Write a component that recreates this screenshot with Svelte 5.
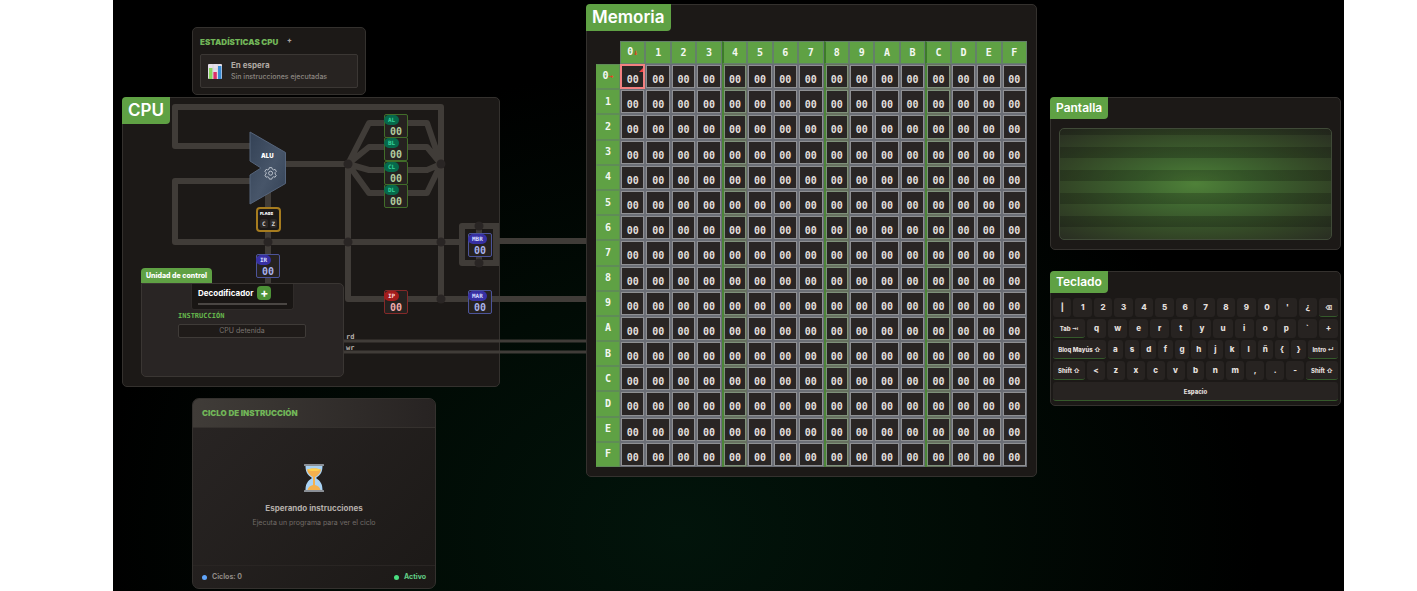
<script>
  const hex = '0123456789ABCDEF'.split('');

  const registers = [
    { name: 'AL', kind: 'green', x: 261, y: 16 },
    { name: 'BL', kind: 'green', x: 261, y: 39 },
    { name: 'CL', kind: 'green', x: 261, y: 63 },
    { name: 'DL', kind: 'green', x: 261, y: 86 },
    { name: 'IR', kind: 'blue', x: 133, y: 156 },
    { name: 'IP', kind: 'red', x: 261, y: 192 },
    { name: 'MBR', kind: 'blue', x: 345, y: 135 },
    { name: 'MAR', kind: 'blue', x: 345, y: 192 }
  ];

  const joints = [
    [348, 164], [441, 164], [268, 242], [348, 242], [441, 242],
    [441, 299], [479, 226], [479, 263]
  ];

  const keyRows = [
    { keys: '| 1 2 3 4 5 6 7 8 9 0 \' ¿'.split(' '), after: { label: '⌫', size: 'del' } },
    { before: { label: 'Tab ⇥', size: 'indent' }, keys: 'q w e r t y u i o p ` +'.split(' ') },
    { before: { label: 'Bloq Mayús ⇧', size: 'caps' }, keys: 'a s d f g h j k l ñ { }'.split(' '), after: { label: 'Intro ↵', size: 'intro' } },
    { before: { label: 'Shift ⇧', size: 'shift' }, keys: '< z x c v b n m , . -'.split(' '), after: { label: 'Shift ⇧', size: 'shift' } }
  ];
</script>

<main class="stage">
  <div class="left">
    <section class="card stats">
      <h2 class="caps-title">ESTADÍSTICAS CPU <button class="expand" aria-label="Expandir">+</button></h2>
      <div class="idle">
        <svg class="chart" viewBox="0 0 14 15" aria-hidden="true">
          <rect width="14" height="15" rx="1" fill="#e4dfe9" />
          <path d="M0 5h14M0 10h14M5 0v15M10 0v15" stroke="#c8c2d0" stroke-width=".5" />
          <rect x="1" y="4" width="3.4" height="11" fill="#87d65b" />
          <rect x="5.4" y="8" width="3.4" height="7" fill="#dc2f68" />
          <rect x="10" y="2" width="3.4" height="13" fill="#388bd4" />
        </svg>
        <div>
          <p class="idle-title">En espera</p>
          <p class="idle-sub">Sin instrucciones ejecutadas</p>
        </div>
      </div>
    </section>

    <section class="card cpu">
      <svg class="wires" viewBox="122 97 465 290" aria-hidden="true">
        <defs>
          <linearGradient id="alu" x1="0" y1="0" x2="1" y2="1">
            <stop offset="0" stop-color="#334155" />
            <stop offset=".55" stop-color="#475569" />
            <stop offset="1" stop-color="#334155" />
          </linearGradient>
        </defs>
        <g fill="none" stroke="#403c38" stroke-width="6" stroke-linejoin="round">
          <path d="M251 146H175V107H441V299" />
          <path d="M251 181H175V242H462" />
          <path d="M268 190V284" />
          <path d="M284 164H348V299H587" />
          <path d="M348 164L369 123H427L441 164L427 193H369L348 164L369 147H427L441 164L427 170H369Z" />
          <path d="M499 226H462V263H499M479 226V263" />
          <path d="M496 224V265" />
          <path d="M496 241H587" />
          <path d="M344 341H587M344 352H587" stroke-width="3" />
        </g>
        <g fill="#292524">
          {#each joints as [x, y]}
            <circle cx={x} cy={y} r="4.5" />
          {/each}
        </g>
        <path d="M250 132L285.5 152.5V183.5L250 204V175L261 168L250 161Z" fill="url(#alu)" stroke="#55647b" />
        <g fill="none" stroke="#b9c0ca" stroke-width="1">
          <path d="M269.4 167.6h2.4l.5 1.6 1.2.7 1.600-.5 1.200 2-1.200 1.200v1.400l1.200 1.200-1.200 2-1.600-.4-1.200.7-.5 1.600h-2.400l-.5-1.600-1.200-.7-1.600.4-1.200-2 1.200-1.200v-1.400l-1.200-1.200 1.200-2 1.600.5 1.200-.7Z" />
          <circle cx="270.6" cy="173.2" r="2" />
        </g>
      </svg>

      <h2 class="tab">CPU</h2>
      <span class="alu-label">ALU</span>

      <div class="flags">
        <span class="flags-name">FLAGS</span>
        <div class="bits"><span>C</span><span>Z</span></div>
      </div>

      {#each registers as r}
        <div class="reg {r.kind}" style="left:{r.x}px; top:{r.y}px">
          <span class="reg-name">{r.name}</span>
          <span class="reg-value">00</span>
        </div>
      {/each}

      <span class="line-name rd">rd</span>
      <span class="line-name wr">wr</span>

      <div class="control">
        <h3 class="control-tab">Unidad de control</h3>
        <div class="control-body">
          <div class="decoder">
            <div class="decoder-row">Decodificador <button class="plus" aria-label="Abrir decodificador">+</button></div>
            <div class="decoder-bar"></div>
          </div>
          <div class="instr">
            <h4>INSTRUCCIÓN</h4>
            <div class="instr-box">CPU detenida</div>
          </div>
        </div>
      </div>
    </section>

    <section class="card cycle">
      <header><h2 class="caps-title">CICLO DE INSTRUCCIÓN</h2></header>
      <div class="cycle-body">
        <svg class="glass" viewBox="0 0 20 28" aria-hidden="true">
          <path d="M1.500 2h17c0 6-2 9-6.500 12 4.500 3 6.500 6 6.500 12h-17c0-6 2-9 6.500-12C3.500 11 1.500 8 1.500 2Z" fill="#a9d2f3" />
          <path d="M3 5.500c4-1.500 10-1.500 14 0-.5 3.500-3 6-6 7.500V21c3 .7 5 2.500 5.500 5h-13c.5-2.500 2.500-4.300 5.500-5v-8c-3-1.500-5.500-4-6-7.500Z" fill="#f4b04d" />
          <path d="M3 5.500c4-1.500 10-1.500 14 0-3 2-11 2-14 0Z" fill="#ffd04e" />
          <rect width="20" height="2" rx=".5" fill="#8a8f96" />
          <rect y="26" width="20" height="2" rx=".5" fill="#8a8f96" />
        </svg>
        <p class="wait">Esperando instrucciones</p>
        <p class="hint">Ejecuta un programa para ver el ciclo</p>
      </div>
      <footer>
        <span class="count"><i></i>Ciclos: 0</span>
        <span class="active"><i></i>Activo</span>
      </footer>
    </section>
  </div>

  <section class="card memory">
    <h2 class="tab">Memoria</h2>
    <table>
      <thead>
        <tr>
          <td class="corner"></td>
          {#each hex as h, i}
            <th scope="col" class:group={i > 0 && i % 4 === 0}>{h}{#if i === 0}<span class="arrow">↓</span>{/if}</th>
          {/each}
        </tr>
      </thead>
      <tbody>
        {#each hex as r, j}
          <tr>
            <th scope="row">{r}{#if j === 0}<span class="arrow">→</span>{/if}</th>
            {#each hex as c, i}
              <td class:group={i > 0 && i % 4 === 0} class:selected={i === 0 && j === 0}><div class="cell">00</div></td>
            {/each}
          </tr>
        {/each}
      </tbody>
    </table>
  </section>

  <div class="right">
    <section class="card screen">
      <h2 class="tab small">Pantalla</h2>
      <div class="crt"></div>
    </section>

    <section class="card keyboard">
      <h2 class="tab small">Teclado</h2>
      <div class="keys">
        {#each keyRows as row}
          <div class="key-row">
            {#if row.before}<button class="key special {row.before.size}">{row.before.label}</button>{/if}
            {#each row.keys as k}<button class="key">{k}</button>{/each}
            {#if row.after}<button class="key special {row.after.size}">{row.after.label}</button>{/if}
          </div>
        {/each}
        <div class="key-row"><button class="key special space">Espacio</button></div>
      </div>
    </section>
  </div>
</main>

<style>
  :global(body) { margin: 0; background: #fff; }
  * { box-sizing: border-box; }
  h2, h3, h4, p { margin: 0; }
  button { margin: 0; padding: 0; border: 0; background: none; color: inherit; font: inherit; cursor: pointer; }

  .stage {
    display: grid;
    grid-template-columns: 378fr 60px 451fr 291fr;
    column-gap: 13px;
    align-items: start;
    min-height: 100vh;
    margin: 0 73px 0 113px;
    padding: 0 3px 0 9px;
    overflow: hidden;
    color: #e7e5e4;
    font-family: Inter, "Open Sans", sans-serif;
    background: radial-gradient(ellipse at 46% 90%, #02140b 0%, #010b05 32%, #000 62%) #000;
  }
  .card { position: relative; border: 1px solid #34312e; border-radius: 5px; background: #1c1917; }
  .left { padding-top: 27px; }
  .memory { grid-column: 3; margin-top: 4px; }
  .right { grid-column: 4; padding-top: 97px; }

  .tab {
    position: relative;
    width: fit-content;
    margin: -1px 0 0 -1px;
    padding: 0 6px;
    border-radius: 4px 0 4px 0;
    background: #5fa144;
    color: #fff;
    font: 600 17px/27px Inter, sans-serif;
  }
  .tab.small { font-size: 12px; line-height: 22px; }
  .caps-title { color: #71b558; font-size: 8px; line-height: 10px; font-weight: 900; }

  .stats { width: 174px; height: 68px; margin-left: 70px; padding: 9px 7px 0; }
  .expand { margin-left: 7px; color: #a8a29e; font-size: 7px; line-height: 8px; vertical-align: top; }
  .idle { display: flex; gap: 9px; align-items: center; height: 34px; margin-top: 7px; padding: 0 7px; border: 1px solid #3b3734; border-radius: 2px; background: #272321; }
  .chart { width: 14px; height: 15px; }
  .idle-title { color: #b0aaa5; font-size: 8px; line-height: 12px; font-weight: 700; }
  .idle-sub { color: #8d8782; font-size: 7px; line-height: 12px; font-weight: 500; }

  .cpu { height: 290px; margin-top: 2px; }
  .wires { position: absolute; left: -1px; top: -1px; width: 465px; height: 290px; pointer-events: none; }
  .alu-label { position: absolute; left: 138px; top: 54px; color: #fff; font-size: 6px; line-height: 8px; font-weight: 900; }

  .flags { position: absolute; left: 133px; top: 109px; width: 25px; height: 25px; padding: 2px; border: 2px solid #a67c1f; border-radius: 4px; background: #1c1917; }
  .flags-name { display: block; color: #fff; font-size: 4px; line-height: 5px; font-weight: 900; }
  .bits { display: flex; gap: 2px; margin-top: 3px; }
  .bits span { flex: 1; border-radius: 2px; background: #2d2927; color: #d6d3d1; font: 700 6px/9px "DejaVu Sans Mono", monospace; text-align: center; }

  .reg { position: absolute; width: 24px; height: 24px; border: 1px solid; border-radius: 2px; background: #262220; }
  .reg-name { position: absolute; left: -1px; top: 0; padding: 0 4px; border-radius: 5px; font: 700 6px/10px "DejaVu Sans Mono", monospace; }
  .reg-value { display: block; padding: 11px 0 0; font: 700 10px/11px "DejaVu Sans Mono", monospace; text-align: center; }
  .green { border-color: #416d29; color: #b2cc9f; }
  .green .reg-name { background: #06694b; color: #36d399; }
  .blue { border-color: #4c549a; color: #a9b3ea; }
  .blue .reg-name { background: #3730a3; color: #d5ddff; }
  .red { border-color: #842929; color: #f0abab; }
  .red .reg-name { background: #a31c1c; color: #fedada; }

  .line-name { position: absolute; left: 223px; color: #b5b0ac; font: 700 7px/9px "DejaVu Sans Mono", monospace; }
  .rd { top: 235px; }
  .wr { top: 246px; }

  .control { position: absolute; left: 18px; top: 170px; width: 203px; }
  .control-tab { width: fit-content; padding: 0 5px; border-radius: 4px 4px 0 0; background: #5fa144; color: #fff; font-size: 7px; line-height: 15px; font-weight: 800; }
  .control-body { height: 94px; border: 1px solid #3a3633; border-radius: 0 5px 5px 5px; background: #292524; }
  .decoder { width: 103px; height: 26px; margin-left: 49px; padding: 2px 6px; border: 1px solid #2f2b29; border-top: 0; border-radius: 0 0 3px 3px; background: #191614; }
  .decoder-row { display: flex; align-items: center; gap: 4px; color: #fff; font-size: 8px; line-height: 14px; font-weight: 700; }
  .plus { width: 14px; height: 14px; border-radius: 4px; background: #4d9237; font-size: 12px; line-height: 14px; }
  .decoder-bar { height: 2px; margin-top: 3px; background: #4a4643; }
  .instr { width: 128px; margin: 2px 0 0 36px; }
  .instr h4 { color: #66b84d; font: 700 7px/9px "DejaVu Sans Mono", monospace; }
  .instr-box { height: 14px; margin-top: 3px; border: 1px solid #3f3b38; border-radius: 2px; background: #1f1b19; color: #7a7470; font-size: 7px; line-height: 12px; text-align: center; }

  .cycle { display: flex; flex-direction: column; width: 244px; height: 191px; margin: 11px 0 0 70px; border-radius: 7px; background: linear-gradient(135deg, #292524, #1c1917); overflow: hidden; }
  .cycle header { padding: 9px; border-bottom: 1px solid #35312e; background: linear-gradient(90deg, #403c38, #272322); }
  .cycle-body { display: flex; flex: 1; flex-direction: column; align-items: center; padding-top: 36px; }
  .glass { width: 20px; height: 28px; }
  .wait { margin-top: 10px; color: #b5afaa; font-size: 8px; line-height: 12px; font-weight: 700; }
  .hint { margin-top: 3px; color: #726c68; font-size: 7px; line-height: 12px; }
  .cycle footer { display: flex; justify-content: space-between; padding: 4px 9px; border-top: 1px solid #292523; font-size: 7px; line-height: 14px; font-weight: 700; }
  .cycle footer span { display: flex; align-items: center; gap: 5px; }
  .cycle footer i { width: 5px; height: 5px; border-radius: 50%; background: #60a5fa; }
  .count { color: #918b86; }
  .active { color: #62cf86; }
  .cycle footer .active i { background: #4ade80; }

  .memory { height: 473px; padding: 0 9px; }
  .memory .tab { margin-left: -10px; }
  table { width: 100%; height: 426px; margin-top: 10px; border-spacing: 0; table-layout: fixed; font: 700 10px/12px "DejaVu Sans Mono", monospace; }
  th, td { padding: 0; text-align: center; }
  .corner { width: 24px; }
  thead tr { height: 23px; }
  th { border: 1px solid #64806a; background: #5fa144; color: #f4f8f2; white-space: nowrap; }
  tbody th { border-color: #5f8c56; border-left-color: #5fa144; }
  thead th.group { border-left: 2px solid #3c7a2a; }
  tbody td { height: 25px; padding: 1px; background: #6b6e76; }
  tbody td.group { padding-left: 2px; background: linear-gradient(90deg, #4b8537 0 2px, #66705f 2px); }
  .cell { height: 100%; padding-top: 7px; border: 1px solid #8f9093; background: #292524; color: #e2dfdc; line-height: 14px; }
  .group .cell { border-color: #7f917a; }
  tbody td.selected { position: relative; padding: 0; background: #f87171; }
  .selected .cell { border: 2px solid #f28080; }
  .selected .cell::after { content: ''; position: absolute; right: 2px; top: 4px; border-left: 4px solid transparent; border-bottom: 4px solid #ef4444; }
  .arrow { color: #f0381c; font-size: 8px; }

  .screen { height: 153px; }
  .crt {
    height: 112px;
    margin: 9px 8px 0;
    border: 1px solid #404a38;
    border-radius: 5px;
    background:
      repeating-linear-gradient(0deg, transparent 0 10.500%, rgba(0, 0, 0, .2) 10.500% 21%),
      radial-gradient(ellipse at center, #4f8139 0%, #3f6630 30%, #334626 68%, #292d22 100%);
  }

  .keyboard { margin-top: 21px; }
  .keys { display: flex; flex-direction: column; gap: 2px; padding: 5px 2px 4px; }
  .key-row { display: flex; gap: 2px; }
  .key { flex: 1 1 0; min-width: 0; height: 19px; border-radius: 3px; background: #272321; color: #e2dfdc; font: 800 8px/17px Inter, sans-serif; white-space: nowrap; }
  .special { flex: none; border-bottom: 1px solid #355a2b; font-size: 6px; }
  .del { width: 19px; }
  .indent { width: 32px; }
  .caps { width: 53px; }
  .intro { width: 30px; }
  .shift { width: 32px; }
  .space { flex: 1; }
</style>
